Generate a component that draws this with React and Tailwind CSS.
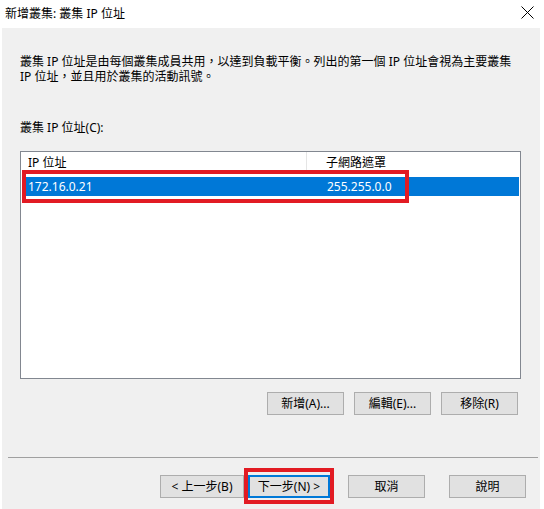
import React from "react";

const font = { fontFamily: '"Noto Sans", "Noto Sans CJK TC", sans-serif' };

const Btn = ({ children, className = "" }) => (
  <button
    className={`h-[23px] bg-[#e1e1e1] border border-[#adadad] text-[12px] leading-none text-black flex items-center justify-center ${className}`}
  >
    {children}
  </button>
);

const App = () => {
  return (
    <div className="w-[544px] h-[509px] bg-white flex flex-col overflow-hidden text-black" style={font}>
      {/* Title bar */}
      <div className="h-[28px] flex items-center justify-between pl-[5px] pr-[10px]">
        <span className="text-[12px] leading-none">新增叢集: 叢集 IP 位址</span>
        <svg width="13" height="13" viewBox="0 0 13 13" className="mt-[-4px]">
          <path d="M0.5 0.5 L12.5 12.5 M12.5 0.5 L0.5 12.5" stroke="#000" strokeWidth="1" />
        </svg>
      </div>

      {/* Body */}
      <div className="flex-1 ml-[2px] mr-[4px] bg-[#f0f0f0] flex flex-col">
        <div className="mt-[27px] ml-[18px] text-[12px] leading-[14px]">
          <div>叢集 IP 位址是由每個叢集成員共用，以達到負載平衡。列出的第一個 IP 位址會視為主要叢集</div>
          <div className="mt-[1px]">IP 位址，並且用於叢集的活動訊號。</div>
        </div>

        <div className="mt-[36px] ml-[18px] text-[12px] leading-[15px]">叢集 IP 位址(C):</div>

        {/* List view */}
        <div className="relative mt-[16px] ml-[18px] w-[501px] h-[228px] bg-white border border-[#828790]">
          <div className="flex h-[22px] items-center text-[12px]">
            <div className="w-[286px] h-full flex items-center pl-[7px] border-r border-[#e5e5e5]">IP 位址</div>
            <div className="pl-[19px]">子網路遮罩</div>
          </div>
          <div className="mt-[3px] mx-px h-[19px] bg-[#0078d7] text-white text-[12px] flex items-center">
            <div className="w-[285px] pl-[6px]">172.16.0.21</div>
            <div className="pl-[20px]">255.255.0.0</div>
          </div>
          {/* red annotation */}
          <div className="absolute left-[1px] top-[18px] w-[387px] h-[33px] border-[4px] border-[#e21b23]" />
        </div>

        {/* List buttons */}
        <div className="mt-[13px] flex justify-end gap-[10px] mr-[22px]">
          <Btn className="w-[77px]">新增(A)...</Btn>
          <Btn className="w-[77px]">編輯(E)...</Btn>
          <Btn className="w-[77px]">移除(R)</Btn>
        </div>

        {/* Separator */}
        <div className="mt-[42px] ml-[6px] mr-[2px] h-px bg-[#a0a0a0]" />

        {/* Wizard buttons */}
        <div className="mt-[17px] flex items-center ml-[158px]">
          <Btn className="w-[84px]">&lt; 上一步(B)</Btn>
          <div className="relative ml-[4px]">
            <button className="w-[82px] h-[23px] bg-[#e1e1e1] border-2 border-[#0078d7] text-[12px] leading-none flex items-center justify-center">
              下一步(N) &gt;
            </button>
            <div className="absolute left-[-4px] right-[-4px] top-[-7px] bottom-[-6px] border-[4px] border-[#e21b23]" />
          </div>
          <Btn className="w-[77px] ml-[18px]">取消</Btn>
          <Btn className="w-[77px] ml-[24px]">說明</Btn>
        </div>
      </div>
    </div>
  );
};

export default App;
